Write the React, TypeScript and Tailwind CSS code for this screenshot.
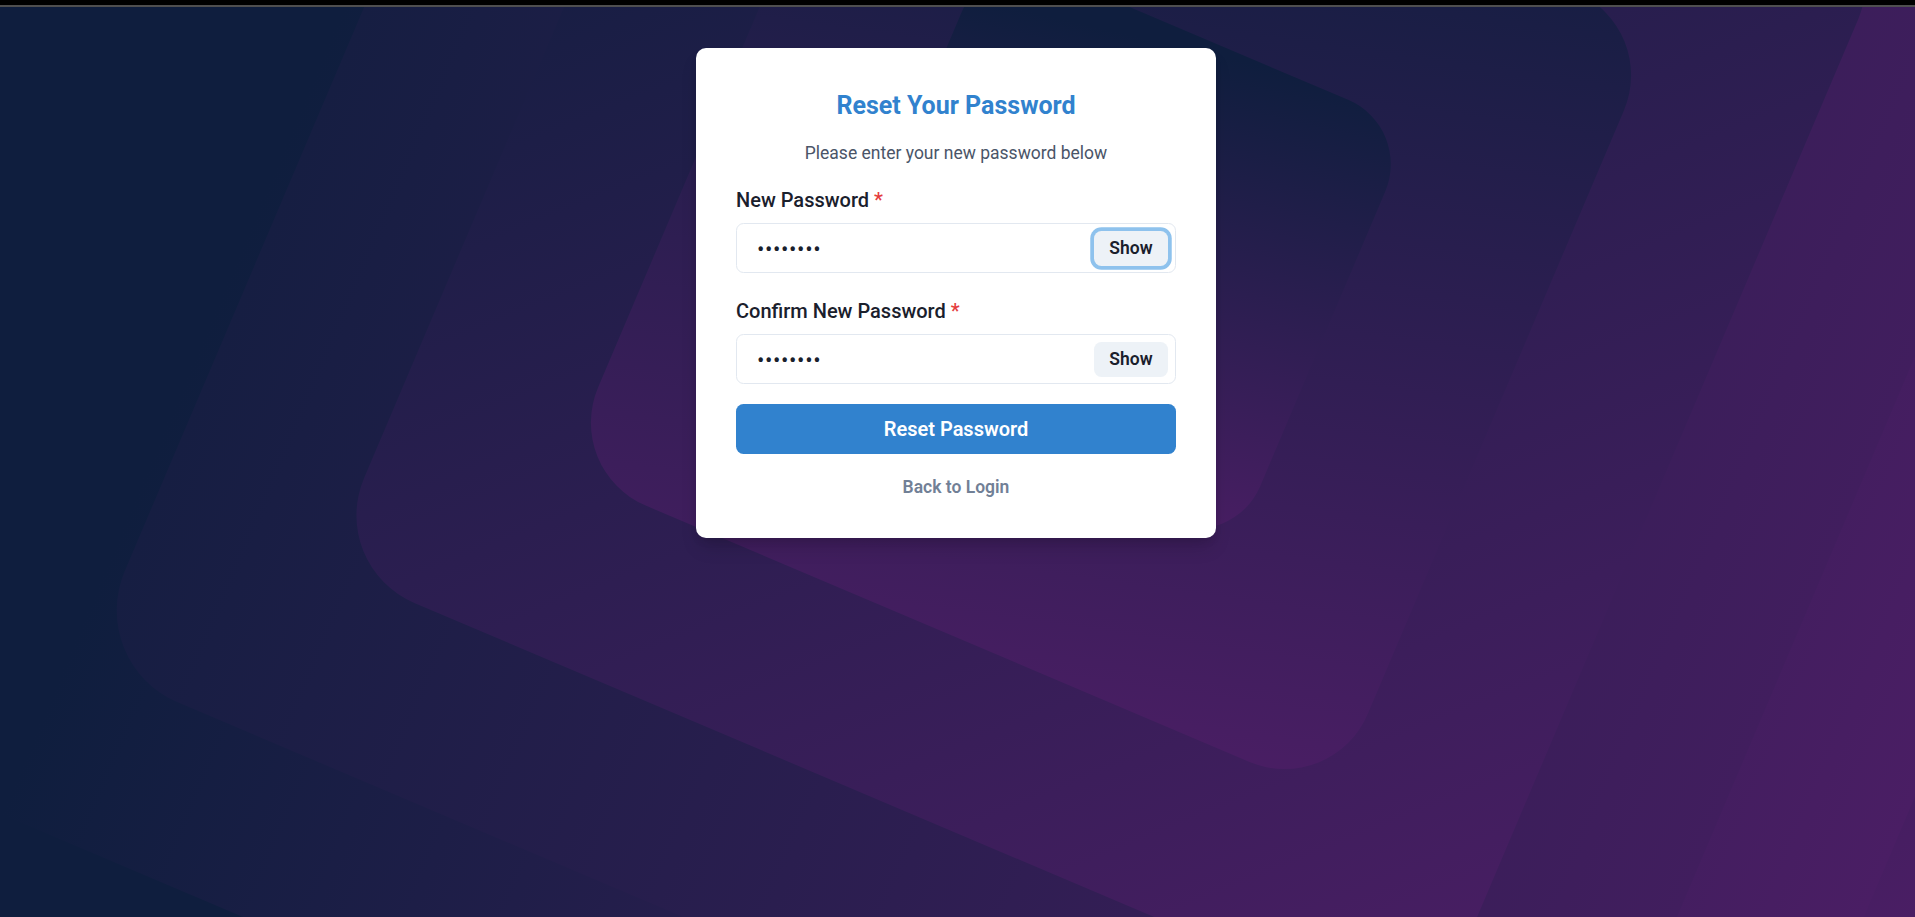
import { useState } from 'react';

// concentric rotated squares behind the card, outermost first
const tiles = [
  'left-[157px] top-[-712px] h-[1908px] w-[1908px] rounded-[100px] bg-[linear-gradient(90deg,#0f1e3e_8%,#4a1e64_100%)]',
  'left-[329px] top-[-540px] h-[1564px] w-[1564px] rounded-[100px] bg-[linear-gradient(90deg,#161e42,#411e5e)]',
  'left-[513px] top-[-356px] h-[1196px] w-[1196px] rounded-[95px] bg-[linear-gradient(135deg,#0f1e3e_10%,#4a1e64_100%)]',
  'left-[693px] top-[-176px] h-[836px] w-[836px] rounded-[90px] bg-[linear-gradient(165deg,#0f1e3e_5%,#4a1e64_100%)]',
  'left-[881px] top-[12px] h-[460px] w-[460px] rounded-[70px] bg-[linear-gradient(170deg,#0f1e3e_10%,#4a1e64_100%)]',
];

const PasswordField = ({ label, focused }: { label: string; focused?: boolean }) => {
  const [show, setShow] = useState(false);

  return (
    <div>
      <label className="mb-[8px] flex items-center text-[20px] leading-[30px] font-medium text-[#1a202c]">
        {label}
        <span className="ml-[5px] text-[#e53e3e]">*</span>
      </label>
      <div className="relative h-[50px] w-full">
        <input
          type={show ? 'text' : 'password'}
          defaultValue="Secret12"
          className="h-full w-full rounded-[7.5px] border border-[#e2e8f0] bg-white pt-[3px] pl-[20px] pr-[90px] text-[22px] tracking-[0.6px] text-[#1a202c] outline-none"
        />
        <div className="absolute right-0 top-0 flex h-full w-[90px] items-center justify-center">
          <button
            type="button"
            onClick={() => setShow(s => !s)}
            className={`h-[35px] rounded-[7.5px] bg-[#edf2f7] px-[15px] text-[17.5px] font-semibold text-[#1a202c] ${
              focused ? 'shadow-[0_0_0_3.75px_rgba(66,153,225,0.6)]' : ''
            }`}
          >
            {show ? 'Hide' : 'Show'}
          </button>
        </div>
      </div>
    </div>
  );
};

export default function App() {
  return (
    <div className="min-h-screen bg-black font-['Segoe_UI',Roboto,'Noto_Sans',sans-serif]">
      <div className="h-[5px] bg-black" />
      <div className="h-[2px] bg-[#4f4f4f]" />

      <div className="relative h-[910px] overflow-hidden bg-[linear-gradient(135deg,#0f1e3e_40%,#4a1e64_100%)]">
        {tiles.map((cls, i) => (
          <div key={i} className={`absolute rotate-[23deg] ${cls}`} />
        ))}

        <div className="relative z-10 flex justify-center pt-[41px] pr-[3px]">
          <div className="w-[520px] rounded-[10px] bg-white px-10 pt-[43px] pb-[38px] shadow-[0_12px_19px_-4px_rgba(0,0,0,0.15),0_5px_8px_-2px_rgba(0,0,0,0.08)]">
            <h1 className="text-center text-[25px] leading-[30px] font-bold text-[#3182ce]">
              Reset Your Password
            </h1>
            <p className="mt-[17px] text-center text-[17.5px] leading-[30px] text-[#4a5568]">
              Please enter your new password below
            </p>

            <div className="mt-[17px]">
              <PasswordField label="New Password" focused />
            </div>
            <div className="mt-[23px]">
              <PasswordField label="Confirm New Password" />
            </div>

            <button
              type="button"
              className="mt-[20px] h-[50px] w-full rounded-[7.5px] bg-[#3182ce] text-[20px] font-semibold text-white"
            >
              Reset Password
            </button>

            <div className="mt-[20px] text-center">
              <a href="#" className="text-[17.5px] leading-[26px] font-semibold text-[#718096]">
                Back to Login
              </a>
            </div>
          </div>
        </div>
      </div>
    </div>
  );
}
